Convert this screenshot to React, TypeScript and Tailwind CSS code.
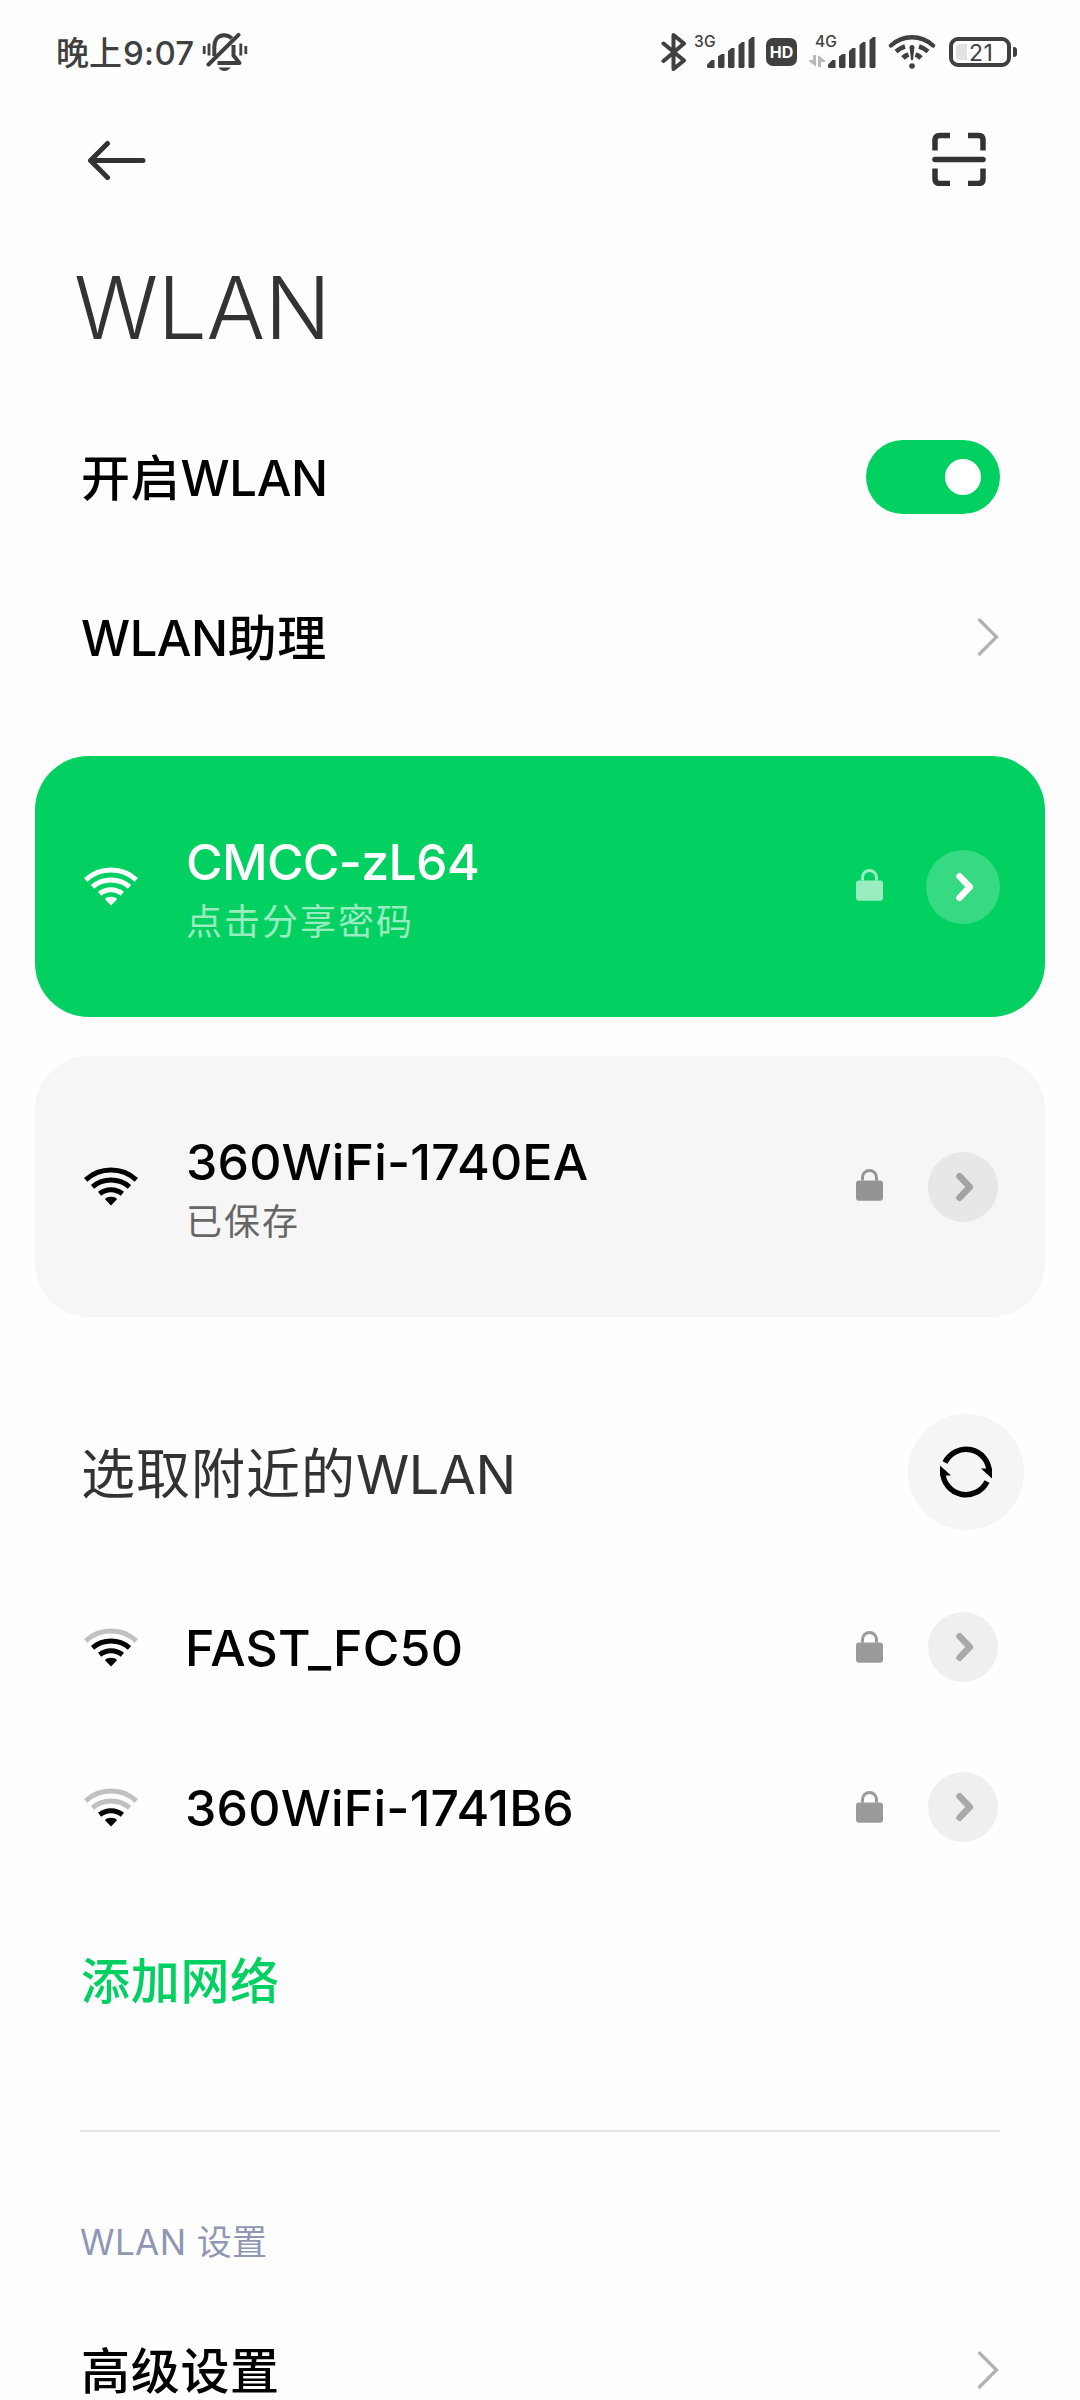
import type { ReactNode } from "react";

const strongText = "whitespace-nowrap text-[50px] leading-[60px] font-[530]";

function BellOff() {
  return (
    <svg className="ml-[7px] h-[40px] w-[46px]" viewBox="0 0 46 40" fill="none" stroke="#404040" strokeLinecap="round">
      <path d="M2.2 14v8M7 11.500v12M38.800 11.500v12M43.800 14v8" strokeWidth="2.800" strokeLinecap="butt" />
      <path d="M12.300 24V15.500C12.300 8 16 3.200 22 3.200c3.200 0 6 1.200 7.800 3.200" strokeWidth="4" strokeLinecap="butt" />
      <path d="M36.500 2.800L6.500 32.500" strokeWidth="4" />
      <path d="M31.500 13v10.500l6 7.500H15.500" strokeWidth="4" strokeLinejoin="round" strokeLinecap="butt" />
      <path d="M16.500 35.500h12c-1.200 2.200-3.500 3.500-6 3.500s-4.800-1.300-6-3.500z" fill="#404040" stroke="none" />
    </svg>
  );
}

function Bluetooth() {
  return (
    <svg className="h-[40px] w-[26px]" viewBox="0 0 26 40" fill="none" stroke="#404040" strokeWidth="4" strokeLinecap="round" strokeLinejoin="round">
      <path d="M2.500 11.500l20.500 17-10.500 8.500V3l10.500 8.500L2.500 29" />
    </svg>
  );
}

function Bars() {
  return (
    <svg className="h-[32px] w-[49px]" viewBox="0 0 49 32" fill="#404040">
      <path d="M0 31v-2.500l4.500-4.500H7.500v8H1z" />
      <path d="M11 31V20.500l3.500-2.500h3v13l-1 1h-4.500z" />
      <path d="M21 31V15l3.500-3h3v19l-1 1h-4.500z" />
      <path d="M31.500 31V9l3.500-3h2.500v25l-1 1h-4z" />
      <path d="M41.500 31V4l3.500-3h2.500v30l-1 1h-4z" />
    </svg>
  );
}

function CellSignal({ label, data }: { label: string; data?: boolean }) {
  return (
    <div className="relative flex h-[32px] w-[61px] items-end justify-end">
      <span className="absolute top-[-2px] left-[-1px] text-[15.500px] leading-[16px] font-medium tracking-[0.200px]">{label}</span>
      {data && (
        <svg className="absolute bottom-[1px] left-[-7px] h-[12px] w-[16px]" viewBox="0 0 16 12" fill="#b9b9b9">
          <path d="M4 0h3v11.500L0 6.500V5h4zM9 12V0l7 5.500V7h-4v5z" />
        </svg>
      )}
      <Bars />
    </div>
  );
}

function StatusWifi() {
  return (
    <svg className="h-[36px] w-[48px]" viewBox="0 0 48 36" fill="none" stroke="#404040">
      <path d="M3 11.500C15 .500 33 .500 45 11.500" strokeWidth="4.400" strokeLinecap="round" />
      <path d="M8 17.500q4-3.600 9-5M40 17.500q-4-3.600-9-5" strokeWidth="4.600" />
      <path d="M15 24.500q2.500-2.500 5.500-3.500M33 24.500q-2.500-2.500-5.500-3.500" strokeWidth="5" transform="translate(0 -.5)" />
      <path d="M21.500 13q0-2 2.500-2t2.500 2L25 26h-2z" fill="#404040" stroke="none" />
      <circle cx="24" cy="32" r="2.800" fill="#404040" stroke="none" />
    </svg>
  );
}

function Battery() {
  return (
    <div className="flex items-center gap-[2px]">
      <div className="flex h-[30px] w-[62px] items-center rounded-[9px] border-4 border-[#404040] pl-[3px]">
        <div className="h-[16px] w-[11px] rounded-l-[4px] bg-[#e2e2e2]" />
        <span className="ml-[2px] pt-[1px] text-[23px] leading-[22px] tracking-[0.500px]">21</span>
      </div>
      <div className="h-[10px] w-[4px] rounded-r-[3px] rounded-l-[1px] bg-[#404040]" />
    </div>
  );
}

function StatusBar() {
  return (
    <div className="flex h-[104px] items-center pr-[63px] pl-[56px] text-[#404040]">
      <span className="pt-[2px] text-[33px] leading-[40px] font-medium">
        晚上<span className="ml-[1px] tracking-[0.300px]">9:07</span>
      </span>
      <BellOff />
      <div className="ml-auto flex items-center">
        <Bluetooth />
        <div className="ml-[8px]">
          <CellSignal label="3G" />
        </div>
        <div className="mr-[1px] ml-[10px] flex h-[28px] w-[31px] items-center justify-center rounded-[7px] bg-[#404040] text-[16px] leading-none font-bold text-white">
          HD
        </div>
        <div className="ml-[18px]">
          <CellSignal label="4G" data />
        </div>
        <div className="ml-[11px]">
          <StatusWifi />
        </div>
        <div className="ml-[13px]">
          <Battery />
        </div>
      </div>
    </div>
  );
}

function Header() {
  return (
    <div className="flex h-[112px] items-center justify-between pr-[94px] pl-[86px]">
      <svg className="h-[40px] w-[60px]" viewBox="0 0 60 40" fill="none" stroke="#333" strokeWidth="5" strokeLinecap="round" strokeLinejoin="round">
        <path d="M57 20.500H5M21.500 3.500L4.500 20.500l17 17" />
      </svg>
      <svg className="mb-[2px] h-[54px] w-[54px]" viewBox="0 0 54 54" fill="none" stroke="#333" strokeWidth="5.500">
        <path d="M3 18.500V8q0-4.500 4.500-4.500H18M36 3.500h10.500q4.500 0 4.500 4.500v10.500M51 36.500V47q0 4.500-4.500 4.500H36M18 51.500H7.500Q3 51.500 3 47V36.500" />
        <path d="M3 27.500h48" strokeLinecap="round" />
      </svg>
    </div>
  );
}

function Wifi({ level, color = "#000" }: { level: number; color?: string }) {
  const tone = (n: number) => (n <= level ? color : "#c0c0c0");
  return (
    <svg className="mb-[1px] h-[40px] w-[56px] shrink-0" viewBox="0 0 56 40" fill="none" strokeWidth="5">
      <path d="M2.700 13.800a37.500 37.500 0 0 1 50.600 0" stroke={tone(4)} />
      <path d="M9.500 20.800a28.500 28.500 0 0 1 37 0" stroke={tone(3)} />
      <path d="M16.600 27.800a18 18 0 0 1 22.800 0" stroke={tone(2)} />
      <path d="M22 33.200c2-3.200 10-3.200 12 0l-6 6.200z" fill={tone(1)} />
    </svg>
  );
}

function Lock({ color }: { color: string }) {
  return (
    <svg className="h-[32px] w-[27px]" viewBox="0 0 27 32">
      <rect x="0" y="11.500" width="27" height="20.300" rx="3" fill={color} />
      <path d="M6.500 11.500V8.500a7 7 0 0 1 14 0v3" fill="none" stroke={color} strokeWidth="3" />
    </svg>
  );
}

function Chevron() {
  return (
    <svg className="mr-[1px] h-[40px] w-[22px]" viewBox="0 0 22 40" fill="none" stroke="#b2b2b2" strokeWidth="3.200" strokeLinecap="round">
      <path d="M2.500 3L19.500 20 2.500 37" />
    </svg>
  );
}

function Detail({ lock, disc, arrow, offset }: { lock: string; disc: string; arrow: string; offset: string }) {
  return (
    <div className="ml-auto flex items-center">
      <div className={offset}>
        <Lock color={lock} />
      </div>
      <div className="ml-[43px] flex w-[74px] justify-center">
        <div className={`flex items-center justify-center rounded-full ${disc}`}>
          <svg className="ml-[3px] h-[30px] w-[20px]" viewBox="0 0 20 30" fill="none" stroke={arrow} strokeWidth="6.600" strokeLinecap="round" strokeLinejoin="round">
            <path d="M4.500 4.300L14.800 15 4.500 25.700" />
          </svg>
        </div>
      </div>
    </div>
  );
}

function Card({ className, icon, title, titleClass, sub, subClass, children }: { className: string; icon: ReactNode; title: string; titleClass: string; sub: string; subClass: string; children: ReactNode }) {
  return (
    <div className={`mx-[35px] mt-[39px] flex h-[261px] items-center rounded-[54px] pr-[45px] pl-[48px] ${className}`}>
      {icon}
      <div className="ml-[47px] flex flex-col pt-[11px]">
        <span className={`${strongText} ${titleClass}`}>{title}</span>
        <span className={`text-[36px] leading-[60px] tracking-[2px] ${subClass}`}>{sub}</span>
      </div>
      {children}
    </div>
  );
}

function NetworkRow({ name, level }: { name: string; level: number }) {
  return (
    <div className="flex h-[160px] items-center pr-[80px] pl-[83px]">
      <Wifi level={level} />
      <span className={`ml-[46px] pt-[2px] ${strongText} tracking-[0.200px]`}>{name}</span>
      <Detail lock="#9a9a9a" disc="size-[70px] bg-[#efefef]" arrow="#a9a9a9" offset="mb-[1px]" />
    </div>
  );
}

function SettingRow({ children, end }: { children: ReactNode; end: ReactNode }) {
  return (
    <div className="flex h-[160px] items-center justify-between pr-[80px] pl-[81px]">
      <span className="pt-[4px] text-[49px] leading-[60px] font-[530] tracking-[0.700px] whitespace-nowrap">{children}</span>
      {end}
    </div>
  );
}

export default function App() {
  return (
    <div className="h-[2400px] w-[1080px] overflow-hidden bg-[#fefefe] font-['Inter','Noto_Sans_CJK_SC',sans-serif] text-black [font-feature-settings:'calt'_0]">
      <StatusBar />
      <Header />
      <div className="flex h-[181px] items-center pt-[2px] pl-[74px]">
        <h1 className="text-[87px] leading-[100px] font-light tracking-[-0.300px] text-[#333]">WLAN</h1>
      </div>
      <SettingRow
        end={
          <div className="flex h-[74px] w-[134px] items-center justify-end rounded-full bg-[#02d162] pr-[19px]">
            <div className="size-[36px] rounded-full bg-white" />
          </div>
        }
      >
        开启<span className="tracking-[-0.300px]">WLAN</span>
      </SettingRow>
      <SettingRow end={<Chevron />}>
        <span className="tracking-[-0.500px]">WLAN</span>助理
      </SettingRow>

      <Card
        className="bg-[#02d162] text-white"
        icon={<Wifi level={4} color="#fff" />}
        title="CMCC-zL64"
        titleClass="tracking-[-0.700px]"
        sub="点击分享密码"
        subClass="text-white/60"
      >
        <Detail lock="#9aedc0" disc="size-[74px] bg-[#35da82]" arrow="#fff" offset="mb-[3px]" />
      </Card>
      <Card
        className="bg-[#f6f6f6]"
        icon={<Wifi level={4} />}
        title="360WiFi-1740EA"
        titleClass="tracking-[0.150px]"
        sub="已保存"
        subClass="text-[#666]"
      >
        <Detail lock="#949494" disc="size-[70px] bg-[#e7e7e7]" arrow="#a3a3a3" offset="mb-[3px]" />
      </Card>

      <div className="mt-[60px] flex h-[190px] items-center justify-between pr-[56px] pl-[81px]">
        <h2 className="pt-[5px] text-[54px] leading-[60px] whitespace-nowrap text-[#333]">
          <span className="tracking-[1px]">选取附近的</span>
          <span className="tracking-[-0.500px]">WLAN</span>
        </h2>
        <div className="flex size-[116px] items-center justify-center rounded-full bg-[#f5f5f5]">
          <svg className="size-[54px]" viewBox="0 0 54 54" fill="none" stroke="#000" strokeWidth="5.500">
            <path d="M6 17.500A23.300 23.300 0 0 1 50.300 27v2" />
            <path d="M48 36.500A23.300 23.300 0 0 1 3.700 27v-2" />
            <path d="M42 23.500h11v10zM12 30.500H1v-10z" fill="#000" stroke="none" />
          </svg>
        </div>
      </div>
      <NetworkRow name="FAST_FC50" level={3} />
      <NetworkRow name="360WiFi-1741B6" level={2} />

      <div className="flex h-[186px] items-center pt-[4px] pl-[81px]">
        <span className="text-[49px] leading-[60px] font-[530] tracking-[0.700px] text-[#02d162]">添加网络</span>
      </div>
      <div className="mx-[80px] mt-[57px] h-[2px] bg-[#e5e5e5]" />
      <div className="flex h-[158px] items-center pt-[61px] pl-[80px]">
        <span className="text-[35px] leading-[40px] tracking-[0.400px] text-[#8f97b3]">WLAN 设置</span>
      </div>
      <SettingRow end={<Chevron />}>高级设置</SettingRow>
    </div>
  );
}
